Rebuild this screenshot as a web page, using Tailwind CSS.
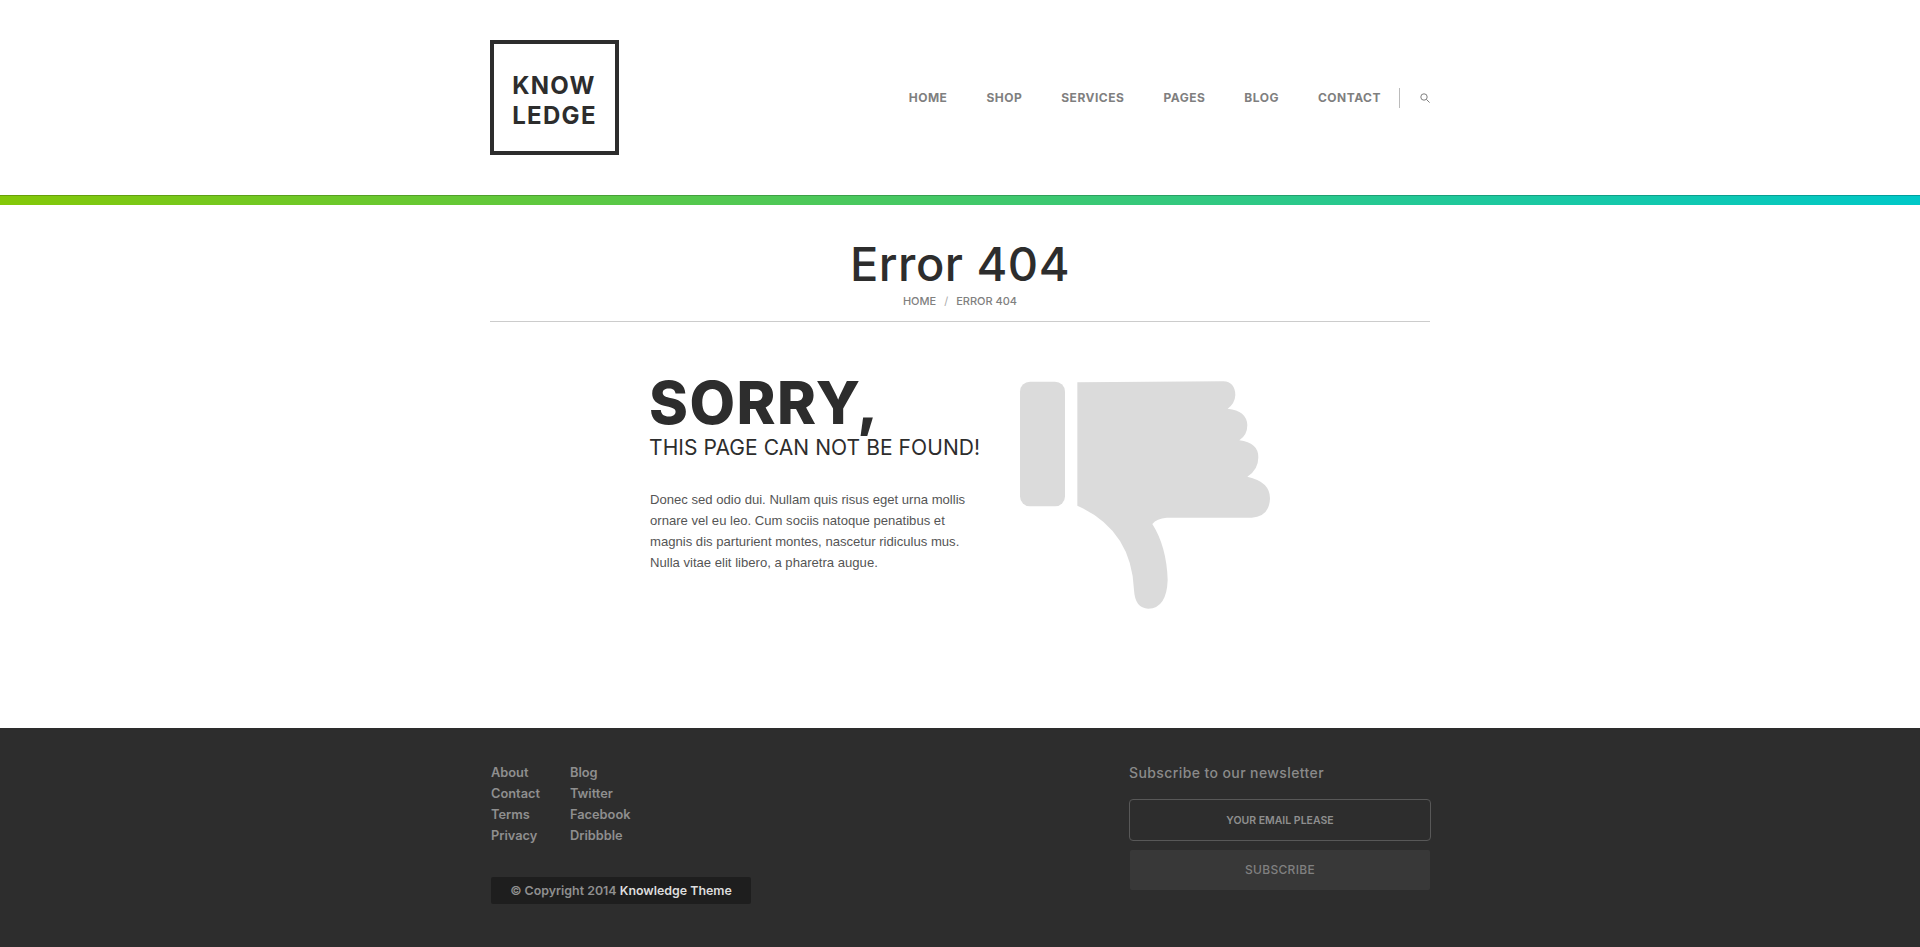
<!DOCTYPE html>
<html lang="en">
<head>
    <meta charset="UTF-8">
    <meta name="viewport" content="width=device-width, initial-scale=1.0">
    <title>Error 404 - Knowledge</title>
    <script src="https://cdn.jsdelivr.net/npm/@tailwindcss/browser@4"></script>
</head>
<body class="bg-white font-['Inter',sans-serif] h-[947px] overflow-hidden">
    <header class="w-[940px] h-[195px] mx-auto flex justify-between items-start pt-10">
        <a href="#" class="w-[129px] h-[115px] border-4 border-[#2d2d2d] pt-[6px] flex items-center justify-center text-[#2d2d2d] text-[24px] leading-[30px] font-bold tracking-[1.3px]">
            <span>KNOW<br>LEDGE</span>
        </a>
        <nav class="flex items-center h-[20px] mt-[48px] text-[12px] font-bold text-[#7f7f7f] tracking-[0.5px]">
            <a href="#" class="mr-[39px]">HOME</a>
            <a href="#" class="mr-[39px]">SHOP</a>
            <a href="#" class="mr-[39px]">SERVICES</a>
            <a href="#" class="mr-[39px]">PAGES</a>
            <a href="#" class="mr-[39px]">BLOG</a>
            <a href="#">CONTACT</a>
            <span class="w-px h-[20px] bg-[#bbbbbb] ml-[18px] mr-[20px]"></span>
            <svg class="w-[10px] h-[10px]" viewBox="0 0 10 10" fill="none" stroke="#7f7f7f" stroke-width="1">
                <circle cx="4" cy="4" r="3.2"></circle>
                <path d="M6.4 6.4L9.6 9.6"></path>
            </svg>
        </nav>
    </header>
    <div class="h-[10px] bg-linear-to-r/srgb from-[#84c808] to-[#00c8c8] border-t border-black/20"></div>

    <section class="w-[940px] h-[117px] mx-auto border-b border-[#cccccc] text-center">
        <h1 class="pt-[33px] text-[47px] leading-[51px] font-medium text-[#2d2d2d] tracking-[0.5px]">Error 404</h1>
        <div class="mt-[5px] text-[11px] leading-[14px] font-medium text-[#808080] flex justify-center gap-[8px]">
            <span>HOME</span><span class="text-[#aaaaaa] font-normal">/</span><span>ERROR 404</span>
        </div>
    </section>

    <main class="h-[406px] flex pl-[650px]">
        <div class="w-[370px]">
            <h2 class="mt-[49px] -ml-px text-[59px] leading-[64px] font-extrabold text-[#2d2d2d] tracking-[1.5px]">SORRY,</h2>
            <h3 class="-ml-px text-[21px] leading-[26px] text-[#2d2d2d] tracking-[0.07px]">THIS PAGE CAN NOT BE FOUND!</h3>
            <p class="mt-[28px] w-[325px] font-['Liberation_Sans',sans-serif] text-[13.1px] leading-[21px] text-[#555555]">Donec sed odio dui. Nullam quis risus eget urna mollis ornare vel eu leo. Cum sociis natoque penatibus et magnis dis parturient montes, nascetur ridiculus mus. Nulla vitae elit libero, a pharetra augue.</p>
        </div>
        <svg class="w-[290px] h-[250px] mt-[48px] ml-[-20px]" viewBox="0 0 870 750" fill="#dbdbdb">
            <rect x="60" y="35" width="135" height="374" rx="30"></rect>
            <path d="M232 37 L670 34 Q705 36 706 75 Q705 100 683 116 Q740 122 742 165 Q742 195 718 211 Q775 218 775 262 Q775 300 742 320 Q810 335 810 385 Q808 440 755 443 L500 443 Q470 445 457 462 Q500 530 503 630 Q500 715 445 716 Q405 715 402 660 Q395 480 232 407 Z"></path>
        </svg>
    </main>

    <footer class="h-[220px] bg-[#2d2d2d]">
        <div class="w-[940px] mx-auto flex justify-between pt-[34px]">
            <div class="pl-[1px]">
                <div class="flex gap-[30px] text-[12.8px] leading-[21px] font-semibold text-[#8f8f8f]">
                    <ul>
                        <li><a href="#">About</a></li>
                        <li><a href="#">Contact</a></li>
                        <li><a href="#">Terms</a></li>
                        <li><a href="#">Privacy</a></li>
                    </ul>
                    <ul>
                        <li><a href="#">Blog</a></li>
                        <li><a href="#">Twitter</a></li>
                        <li><a href="#">Facebook</a></li>
                        <li><a href="#">Dribbble</a></li>
                    </ul>
                </div>
                <div class="mt-[31px] w-[260px] h-[27px] bg-[#1e1e1e] rounded-[2px] text-[12.4px] leading-[27px] font-semibold text-[#8f8f8f] text-center">
                    © Copyright 2014 <span class="text-[#dddddd]">Knowledge Theme</span>
                </div>
            </div>
            <form class="w-[302px] mr-[-1px]">
                <h4 class="text-[14px] leading-[22px] font-medium text-[#8a8a8a] tracking-[0.4px]">Subscribe to our newsletter</h4>
                <input type="text" placeholder="YOUR EMAIL PLEASE" class="block mt-[15px] w-full h-[42px] border border-[#585858] rounded-[4px] bg-transparent text-center text-[10.5px] font-semibold placeholder:text-[#8f8f8f]">
                <button type="button" class="block mt-[9px] mx-auto w-[300px] h-[40px] bg-[#383838] rounded-[2px] text-[12px] font-medium text-[#808080] tracking-[0.3px]">SUBSCRIBE</button>
            </form>
        </div>
    </footer>
</body>
</html>
